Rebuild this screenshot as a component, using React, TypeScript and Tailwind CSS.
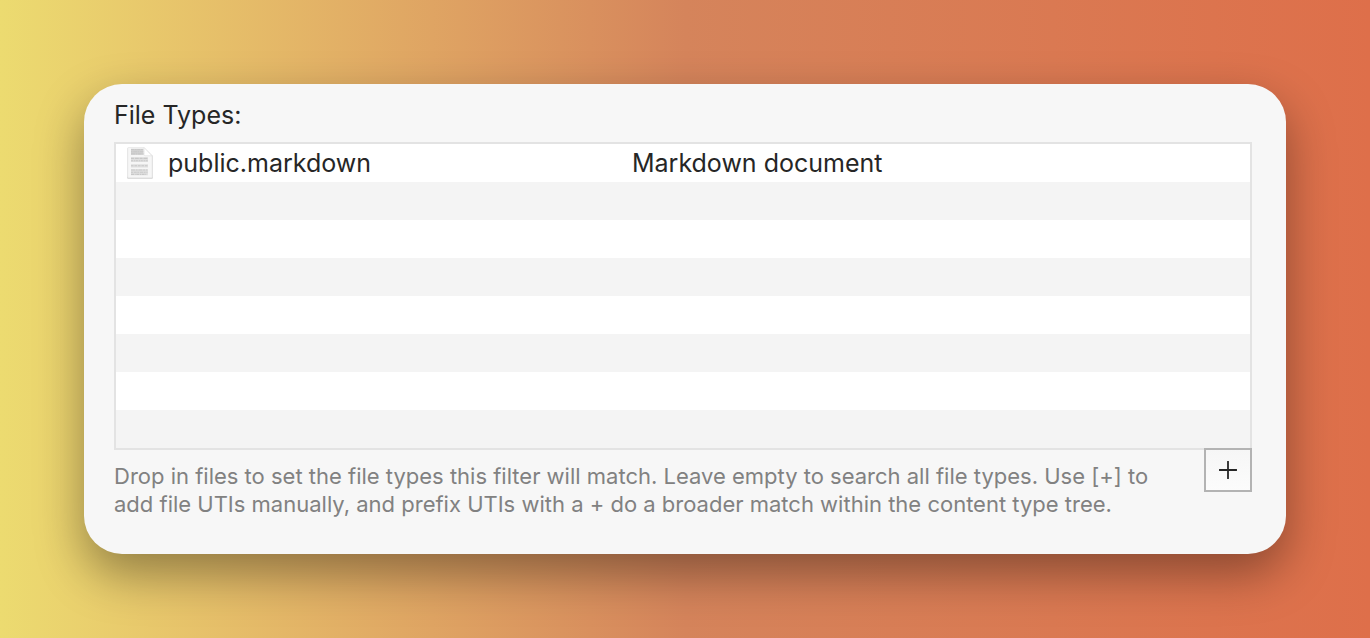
type FileType = { uti: string; description: string };

const fileTypes: FileType[] = [
  { uti: "public.markdown", description: "Markdown document" },
];

const VISIBLE_ROWS = 8;

function DocumentIcon() {
  return (
    <svg width="28" height="34" viewBox="0 0 28 34" aria-hidden="true" className="shrink-0">
      <path d="M2.5 1.5H18L27 10V31.5Q27 33 25.5 33H2.5Q1 33 1 31.5V3Q1 1.5 2.5 1.5Z" fill="#dcdcdc" />
      <path d="M2.8 1.5H18L26 9.8V30.5Q26 31.5 25 31.5H2.8Q1.8 31.5 1.8 30.5V2.5Q1.8 1.5 2.8 1.5Z" fill="#f6f6f6" stroke="#ebebeb" strokeWidth="0.8" />
      <path d="M5 2.8H17.5V8.8H5Z" fill="#d2d2d2" />
      <path d="M5 11.3H22V16H5ZM5 18.3H22V21.5H5ZM5 23.3H22V29.3H5Z" fill="#e0e0e0" />
      <g fill="none" stroke="#c8c8c8" strokeWidth="1.1">
        <path d="M5 3.5H17.5" strokeDasharray="3 .6 2 .6" />
        <path d="M5 5.7H17.5" strokeDasharray="1.5 .7 4 .6" />
        <path d="M5 7.9H18" strokeDasharray="4 .6 1.5 .6" />
        <path d="M5 12.4H22" strokeDasharray="3 .8 4 .8" />
        <path d="M5 14.7H22" strokeDasharray="2 .8 1.5 .6" />
        <path d="M5 19.8H22" strokeDasharray="2.5 1" />
        <path d="M5 24H21.5" strokeDasharray="4 .7 2 .7" />
        <path d="M5 26.2H21.5" strokeDasharray="2 .7 3 .6" />
        <path d="M5 28.4H20.5" strokeDasharray="3 .7 1 .6" />
      </g>
      <path d="M18 1.5V8.8Q18 9.8 19 9.8H26Z" fill="#fff" stroke="#e2e2e2" strokeWidth="0.8" />
    </svg>
  );
}

export default function App() {
  return (
    <main className="flex min-h-screen flex-col bg-linear-to-r from-[#ecdb70] via-[#d5845b] to-[#de6f4a] p-[84px] font-['Inter',sans-serif] font-[425] text-[#262626]">
      <section
        aria-labelledby="file-types"
        className="rounded-[38px] bg-[#f7f7f7] pt-[15px] pr-[34px] pb-9 pl-[30px] shadow-[0_20px_48px_rgba(0,0,0,0.37)]"
      >
        <h1 id="file-types" className="text-[25px] leading-8 font-[425]">
          File Types:
        </h1>
        <div className="mt-[11px] border-2 border-[#e3e3e3]">
          <table aria-labelledby="file-types" className="w-full table-fixed border-collapse text-left text-[25px] leading-8">
            <colgroup>
              <col className="w-[45.5%]" />
              <col />
            </colgroup>
            <tbody>
              {Array.from({ length: VISIBLE_ROWS }, (_, i) => {
                const item = fileTypes[i];
                return (
                  <tr key={i} className="h-[38px] odd:bg-white even:bg-[#f4f4f4]">
                    <td className="p-0">
                      {item && (
                        <div className="flex items-center gap-[14px] pl-[10px]">
                          <DocumentIcon />
                          {item.uti}
                        </div>
                      )}
                    </td>
                    <td className="p-0">{item?.description}</td>
                  </tr>
                );
              })}
            </tbody>
          </table>
        </div>
        <div className="flex items-start justify-between gap-8">
          <p className="mt-3 text-[22px] leading-7 text-[#818181]">
            Drop in files to set the file types this filter will match. Leave empty to search all file types. Use [+] to
            add file UTIs manually, and prefix UTIs with a + do a broader match within the content type tree.
          </p>
          <button
            type="button"
            aria-label="Add file type"
            className="-mt-[2px] flex h-11 w-12 shrink-0 items-center justify-center border-2 border-[#b3b3b3] bg-linear-to-b from-[#f6f6f6] to-[#fcfcfc]"
          >
            <svg width="18" height="18" viewBox="0 0 18 18" aria-hidden="true">
              <path d="M9 0.5V17.5M0.5 9H17.5" fill="none" stroke="#262626" strokeWidth="1.8" strokeLinecap="round" />
            </svg>
          </button>
        </div>
      </section>
    </main>
  );
}
